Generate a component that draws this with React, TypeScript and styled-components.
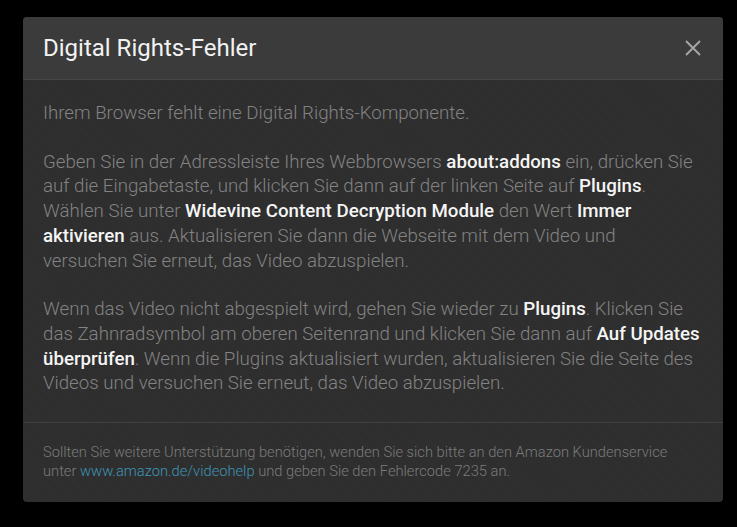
import React from 'react'
import styled, { createGlobalStyle } from 'styled-components'

const GlobalStyle = createGlobalStyle`
  html, body {
    margin: 0;
    padding: 0;
    background: #000;
  }
  body {
    font-family: Roboto, "Liberation Sans", Arial, sans-serif;
    -webkit-font-smoothing: antialiased;
  }
`

const Page = styled.div`
  width: 737px;
  height: 527px;
  padding: 17px 0 0 23px;
  box-sizing: border-box;
`

const Modal = styled.div`
  width: 700px;
  border-radius: 4px;
  overflow: hidden;
  background-color: #2e2e2e;
  background-image: repeating-linear-gradient(
      45deg,
      rgba(255, 255, 255, 0.012) 0px,
      rgba(255, 255, 255, 0.012) 1px,
      transparent 1px,
      transparent 2px
    ),
    repeating-linear-gradient(
      -45deg,
      rgba(0, 0, 0, 0.02) 0px,
      rgba(0, 0, 0, 0.02) 1px,
      transparent 1px,
      transparent 2px
    );
`

const Header = styled.div`
  display: flex;
  align-items: center;
  justify-content: space-between;
  height: 62px;
  padding: 0 20px;
  background: #3b3b3b;
  border-bottom: 1px solid #474747;
`

const Title = styled.h1`
  margin: 0;
  font-size: 24px;
  font-weight: 400;
  color: #f2f2f2;
`

const CloseButton = styled.button`
  display: flex;
  align-items: center;
  justify-content: center;
  width: 24px;
  height: 24px;
  margin-right: -2px;
  padding: 0;
  border: none;
  background: transparent;
  cursor: pointer;
`

const Body = styled.div`
  padding: 21px 20px 2px;
  border-bottom: 1px solid #404040;
`

const Paragraph = styled.p`
  margin: 0 0 24px;
  font-size: 18.7px;
  line-height: 24.7px;
  font-weight: 300;
  color: #838383;
`

const Strong = styled.b`
  font-weight: 500;
  color: #f5f5f5;
`

const Footer = styled.div`
  padding: 20px 20px 21px;
  font-size: 14.7px;
  line-height: 19px;
  font-weight: 300;
  color: #7b7b7b;
`

const Link = styled.a`
  color: #3e94b5;
  text-decoration: none;
`

const CloseIcon = () => (
  <svg width="18" height="18" viewBox="0 0 18 18">
    <path d="M2 2 L16 16 M16 2 L2 16" stroke="#a8a8a8" strokeWidth="1.8" fill="none" />
  </svg>
)

export default function App() {
  return (
    <Page>
      <GlobalStyle />
      <Modal>
        <Header>
          <Title>Digital Rights-Fehler</Title>
          <CloseButton aria-label="Schließen">
            <CloseIcon />
          </CloseButton>
        </Header>
        <Body>
          <Paragraph>Ihrem Browser fehlt eine Digital Rights-Komponente.</Paragraph>
          <Paragraph>
            Geben Sie in der Adressleiste Ihres Webbrowsers <Strong>about:addons</Strong> ein, drücken Sie auf die
            Eingabetaste, und klicken Sie dann auf der linken Seite auf <Strong>Plugins</Strong>. Wählen Sie unter{' '}
            <Strong>Widevine Content Decryption Module</Strong> den Wert <Strong>Immer aktivieren</Strong> aus.
            Aktualisieren Sie dann die Webseite mit dem Video und versuchen Sie erneut, das Video abzuspielen.
          </Paragraph>
          <Paragraph>
            Wenn das Video nicht abgespielt wird, gehen Sie wieder zu <Strong>Plugins</Strong>. Klicken Sie das
            Zahnradsymbol am oberen Seitenrand und klicken Sie dann auf <Strong>Auf Updates überprüfen</Strong>. Wenn
            die Plugins aktualisiert wurden, aktualisieren Sie die Seite des Videos und versuchen Sie erneut, das Video
            abzuspielen.
          </Paragraph>
        </Body>
        <Footer>
          Sollten Sie weitere Unterstützung benötigen, wenden Sie sich bitte an den Amazon Kundenservice unter{' '}
          <Link href="#">www.amazon.de/videohelp</Link> und geben Sie den Fehlercode 7235 an.
        </Footer>
      </Modal>
    </Page>
  )
}
